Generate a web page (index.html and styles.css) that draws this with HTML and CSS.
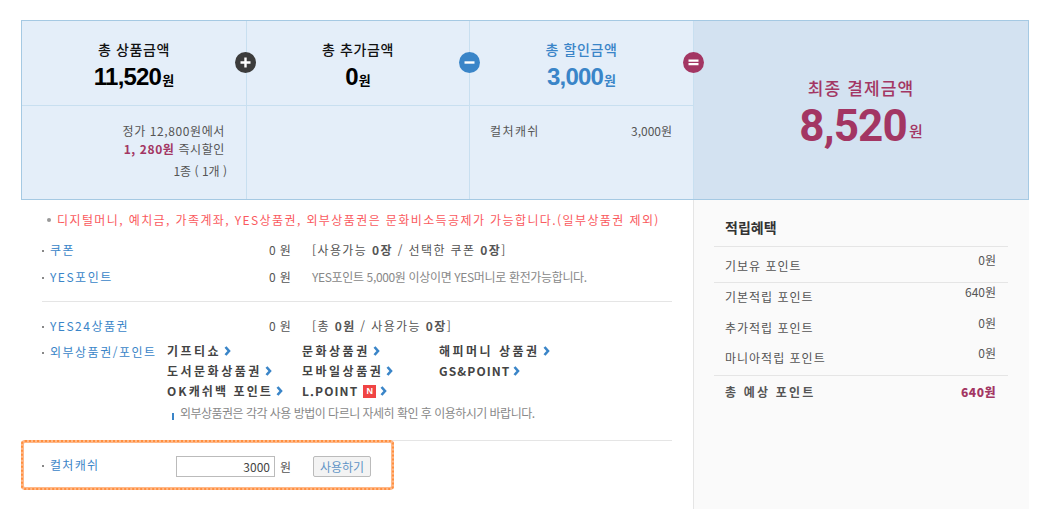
FILE: index.html
```html
<!DOCTYPE html>
<html lang="ko">
<head>
    <meta charset="UTF-8">
    <title>결제</title>
    <link rel="stylesheet" href="styles.css">
</head>
<body>
    <div class="wrap">
        <!-- Amount summary -->
        <section class="summary">
            <div class="sum-head">
                <h3>총 상품금액</h3>
                <p class="amount">11,520<small>원</small></p>
                <span class="op op-plus"><svg viewBox="0 0 21 21"><path d="M10.5 5.5v10M5.5 10.5h10"/></svg></span>
            </div>
            <div class="sum-head">
                <h3>총 추가금액</h3>
                <p class="amount">0<small>원</small></p>
                <span class="op op-minus"><svg viewBox="0 0 21 21"><path d="M5.5 10.5h10"/></svg></span>
            </div>
            <div class="sum-head sum-blue">
                <h3>총 할인금액</h3>
                <p class="amount">3,000<small>원</small></p>
                <span class="op op-equal"><svg viewBox="0 0 21 21"><path d="M5.5 8.7h10M5.5 12.1h10"/></svg></span>
            </div>
            <div class="sum-final">
                <h3>최종 결제금액</h3>
                <p class="final-amount">8,520<small>원</small></p>
            </div>
            <div class="sum-body sum-right">
                <p>정가 12,800원에서</p>
                <p><b class="plum">1, 280원</b> 즉시할인</p>
                <p class="count">1종 ( 1개 )</p>
            </div>
            <div class="sum-body"></div>
            <div class="sum-body sum-split">
                <span class="sum-name">컬처캐쉬</span>
                <span>3,000원</span>
            </div>
        </section>

        <div class="lower">
            <!-- Payment methods -->
            <main class="pay">
                <p class="notice">디지털머니, 예치금, 가족계좌, YES상품권, 외부상품권은 문화비소득공제가 가능합니다.(일부상품권 제외)</p>

                <div class="group group-first">
                    <div class="row">
                        <a class="label">쿠폰</a>
                        <span class="won">0 원</span>
                        <span class="info">[사용가능 <b>0장</b> / 선택한 쿠폰 <b>0장</b>]</span>
                    </div>
                    <div class="row">
                        <a class="label">YES포인트</a>
                        <span class="won">0 원</span>
                        <span class="info info-grey">YES포인트 5,000원 이상이면 YES머니로 환전가능합니다.</span>
                    </div>
                </div>

                <div class="group group-second">
                    <div class="row row-voucher">
                        <a class="label">YES24상품권</a>
                        <span class="won">0 원</span>
                        <span class="info">[총 <b>0원</b> / 사용가능 <b>0장</b>]</span>
                    </div>
                    <div class="row row-gift">
                        <a class="label">외부상품권/포인트</a>
                        <div class="gifts">
                            <a>기프티쇼<svg class="chev" viewBox="0 0 8 10"><path d="M1.5 1l3.5 4-3.5 4"/></svg></a>
                            <a>문화상품권<svg class="chev" viewBox="0 0 8 10"><path d="M1.5 1l3.5 4-3.5 4"/></svg></a>
                            <a>해피머니 상품권<svg class="chev" viewBox="0 0 8 10"><path d="M1.5 1l3.5 4-3.5 4"/></svg></a>
                            <a>도서문화상품권<svg class="chev" viewBox="0 0 8 10"><path d="M1.5 1l3.5 4-3.5 4"/></svg></a>
                            <a>모바일상품권<svg class="chev" viewBox="0 0 8 10"><path d="M1.5 1l3.5 4-3.5 4"/></svg></a>
                            <a class="latin">GS&amp;POINT<svg class="chev" viewBox="0 0 8 10"><path d="M1.5 1l3.5 4-3.5 4"/></svg></a>
                            <a class="ok">OK캐쉬백 포인트<svg class="chev" viewBox="0 0 8 10"><path d="M1.5 1l3.5 4-3.5 4"/></svg></a>
                            <a class="latin">L.POINT<span class="new">N</span><svg class="chev" viewBox="0 0 8 10"><path d="M1.5 1l3.5 4-3.5 4"/></svg></a>
                        </div>
                    </div>
                    <p class="gift-note"><i class="mark"></i>외부상품권은 각각 사용 방법이 다르니 자세히 확인 후 이용하시기 바랍니다.</p>
                </div>

                <div class="cash">
                    <a class="label">컬처캐쉬</a>
                    <input class="cash-input" type="text" value="3000">
                    <span class="cash-unit">원</span>
                    <button class="cash-btn" type="button">사용하기</button>
                    <div class="highlight"></div>
                </div>
            </main>

            <!-- Points -->
            <aside class="points">
                <h4>적립혜택</h4>
                <div class="pt-group pt-own">
                    <div class="pt-row"><span>기보유 포인트</span><em>0원</em></div>
                </div>
                <div class="pt-group pt-earn">
                    <div class="pt-row"><span>기본적립 포인트</span><em>640원</em></div>
                    <div class="pt-row"><span>추가적립 포인트</span><em>0원</em></div>
                    <div class="pt-row"><span>마니아적립 포인트</span><em>0원</em></div>
                </div>
                <div class="pt-total">
                    <span>총 예상 포인트</span><b class="plum">640원</b>
                </div>
            </aside>
        </div>
    </div>
</body>
</html>
```

FILE: styles.css
```css
body {
    margin: 0;
    background: #fff;
    color: #555;
    font-family: "Noto Sans CJK KR", "Liberation Sans", sans-serif;
    font-size: 12px;
    overflow: hidden;
}

h3, h4, p {
    margin: 0;
}

.wrap {
    width: 1008px;
    height: 489px;
    padding: 20px 0 0 21px;
    overflow: hidden;
}

.plum {
    color: #a33663;
}

/* Summary box */
.summary {
    display: grid;
    grid-template-columns: 225px 223px 224px 1fr;
    grid-template-rows: 85px 93px;
    width: 1008px;
    height: 180px;
    box-sizing: border-box;
    border: 1px solid #a5c9e3;
    background: #e4eef9;
}

.sum-head {
    position: relative;
    text-align: center;
    border-right: 1px solid #c8dff0;
    border-bottom: 1px solid #c8dff0;
    padding-top: 18px;
}

.sum-head h3 {
    font-size: 14px;
    line-height: 20px;
    font-weight: 500;
    color: #111;
    letter-spacing: 0.6px;
}

.amount {
    font-family: "Liberation Sans", sans-serif;
    font-size: 24px;
    line-height: 30px;
    font-weight: 700;
    color: #000;
    letter-spacing: -0.8px;
    margin-top: 3px;
}

.amount small {
    font-family: "Noto Sans CJK KR", sans-serif;
    font-size: 13px;
    letter-spacing: 0;
    margin-left: 1px;
}

.sum-blue h3,
.sum-blue .amount {
    color: #3a85c8;
}

.op {
    position: absolute;
    right: -11px;
    top: 31px;
    width: 21px;
    height: 21px;
    border-radius: 50%;
    z-index: 1;
}

.op svg {
    display: block;
}

.op path {
    fill: none;
    stroke: #fff;
    stroke-width: 2.4;
}

.op-equal path {
    stroke-width: 2.2;
}

.op-plus { background: #3c3c3c; right: -10px; }
.op-minus { background: #3a85c8; }
.op-equal { background: #a33663; }

.sum-final {
    grid-column: 4;
    grid-row: 1 / span 2;
    background: #d3e2f1;
    text-align: center;
    padding-top: 55px;
}

.sum-final h3 {
    font-size: 17px;
    line-height: 24px;
    font-weight: 500;
    color: #a33663;
    letter-spacing: 1.1px;
}

.final-amount {
    font-family: Roboto, "Liberation Sans", sans-serif;
    font-size: 44px;
    line-height: 46px;
    font-weight: 700;
    color: #a33663;
    letter-spacing: -0.8px;
    margin-top: 3px;
}

.final-amount small {
    font-family: "Noto Sans CJK KR", sans-serif;
    font-size: 15px;
    font-weight: 500;
    letter-spacing: 0;
    margin-left: 2px;
    vertical-align: 4px;
}

.sum-body {
    border-right: 1px solid #c8dff0;
    padding: 16px 21px 0 20px;
    line-height: 18px;
    color: #555;
}

.sum-right {
    text-align: right;
    letter-spacing: 0.6px;
}

.sum-right .count {
    margin: 4px -2px 0 0;
    letter-spacing: 0;
}

.sum-split {
    display: flex;
    justify-content: space-between;
    align-items: flex-start;
}

.sum-name {
    letter-spacing: 1.4px;
}

/* Lower part */
.lower {
    display: flex;
    height: 309px;
}

.pay {
    width: 630px;
    margin-right: 21px;
    padding-left: 21px;
    flex: none;
}

.notice {
    position: relative;
    color: #fa5a5e;
    margin: 11px 0 0 15px;
    line-height: 18px;
    letter-spacing: 1.4px;
    white-space: nowrap;
}

.notice::before {
    content: "";
    position: absolute;
    left: -10px;
    top: 7px;
    width: 4px;
    height: 4px;
    border-radius: 50%;
    background: #999;
}

.group {
    box-sizing: border-box;
    border-bottom: 1px solid #e5e5e5;
}

.group-first {
    height: 73px;
    padding-top: 12px;
}

.group-second {
    height: 139px;
    padding-top: 15px;
}

.row {
    display: flex;
    height: 27px;
    line-height: 18px;
    white-space: nowrap;
}

.row-voucher {
    height: 26px;
}

.label {
    position: relative;
    display: block;
    flex: none;
    width: 219px;
    padding-left: 8px;
    color: #3a85c8;
    letter-spacing: 1.5px;
    line-height: 18px;
}

.label::before {
    content: "";
    position: absolute;
    left: 0;
    top: 9px;
    width: 2px;
    height: 2px;
    background: #888;
}

.won {
    width: 43px;
    flex: none;
    letter-spacing: 0.4px;
}

.info {
    letter-spacing: 1.4px;
}

.info-grey {
    color: #888;
    letter-spacing: -0.35px;
}

.row-gift {
    height: 60px;
}

.row-gift .label {
    width: 117px;
}

.gifts {
    display: grid;
    grid-template-columns: 135px 137px auto;
    grid-auto-rows: 20px;
    margin-top: -2px;
}

.gifts a {
    display: flex;
    align-items: center;
    font-weight: 700;
    color: #444;
    letter-spacing: 2.5px;
}

.gifts a.latin {
    letter-spacing: 1.1px;
}

.gifts a.ok {
    letter-spacing: 2.1px;
}

.chev {
    width: 8px;
    height: 10px;
    margin-left: 3px;
    flex: none;
}

.chev path {
    fill: none;
    stroke: #3a85c8;
    stroke-width: 2.6;
}

.new {
    width: 13px;
    height: 13px;
    margin-left: 5px;
    background: #f04444;
    color: #fff;
    font-family: "Liberation Sans", sans-serif;
    font-size: 9px;
    line-height: 13px;
    text-align: center;
    letter-spacing: 0;
}

.new + .chev {
    margin-left: 4px;
}

.gift-note {
    color: #888;
    padding-left: 130px;
    letter-spacing: -0.52px;
    line-height: 18px;
    margin-top: 1px;
    white-space: nowrap;
}

.mark {
    display: inline-block;
    width: 2px;
    height: 7px;
    margin-right: 6px;
    background: #3a85c8;
    vertical-align: -2px;
}

/* Culture cash */
.cash {
    position: relative;
    display: flex;
    align-items: center;
    height: 50px;
}

.cash .label {
    width: 126px;
    margin-top: -2px;
    letter-spacing: 1.3px;
}

.cash-input {
    width: 99px;
    height: 21px;
    box-sizing: border-box;
    border: 1px solid #bbb;
    padding: 0 4px;
    text-align: right;
    font: 12px "Noto Sans CJK KR", sans-serif;
    color: #444;
}

.cash-unit {
    margin: 0 22px 0 5px;
}

.cash-btn {
    width: 58px;
    height: 21px;
    padding: 0;
    border: 1px solid #bbb;
    border-radius: 2px;
    background: #f3f3f3;
    color: #5f93c6;
    font: 12px "Noto Sans CJK KR", sans-serif;
}

/* Orange marker drawn over the cash row */
.highlight {
    position: absolute;
    left: -21px;
    top: -1px;
    width: 373px;
    height: 50px;
    box-sizing: border-box;
    border: 3px solid #ffb888;
    border-radius: 4px;
}

.highlight::after {
    content: "";
    position: absolute;
    inset: -3px;
    border: 2px dotted #ff8f3f;
    border-radius: 4px;
}

/* Points panel */
.points {
    flex: 1;
    background: #fafafa;
    border-left: 1px solid #e5e5e5;
    padding: 17px 21px 0 20px;
}

.points h4 {
    font-size: 14px;
    line-height: 20px;
    font-weight: 700;
    color: #333;
    padding-left: 11px;
}

.pt-group {
    border-top: 1px solid #e5e5e5;
}

.pt-own {
    margin-top: 9px;
}

.pt-earn {
    height: 92px;
}

.pt-row {
    display: flex;
    justify-content: space-between;
    height: 30.5px;
    padding: 0 12px 0 11px;
}

.pt-own .pt-row {
    height: 35px;
}

.pt-row span {
    padding-top: 5px;
    line-height: 18px;
    letter-spacing: 1px;
}

.pt-own .pt-row span {
    padding-top: 10px;
}

.pt-row em {
    font-style: normal;
    line-height: 18px;
}

.pt-own .pt-row em {
    padding-top: 4px;
}

.pt-total {
    display: flex;
    justify-content: space-between;
    border-top: 1px solid #e5e5e5;
    padding: 7px 12px 0 11px;
    line-height: 18px;
    font-weight: 700;
}

.pt-total span {
    letter-spacing: 2.2px;
}

.pt-total b {
    letter-spacing: 0.5px;
}
```
